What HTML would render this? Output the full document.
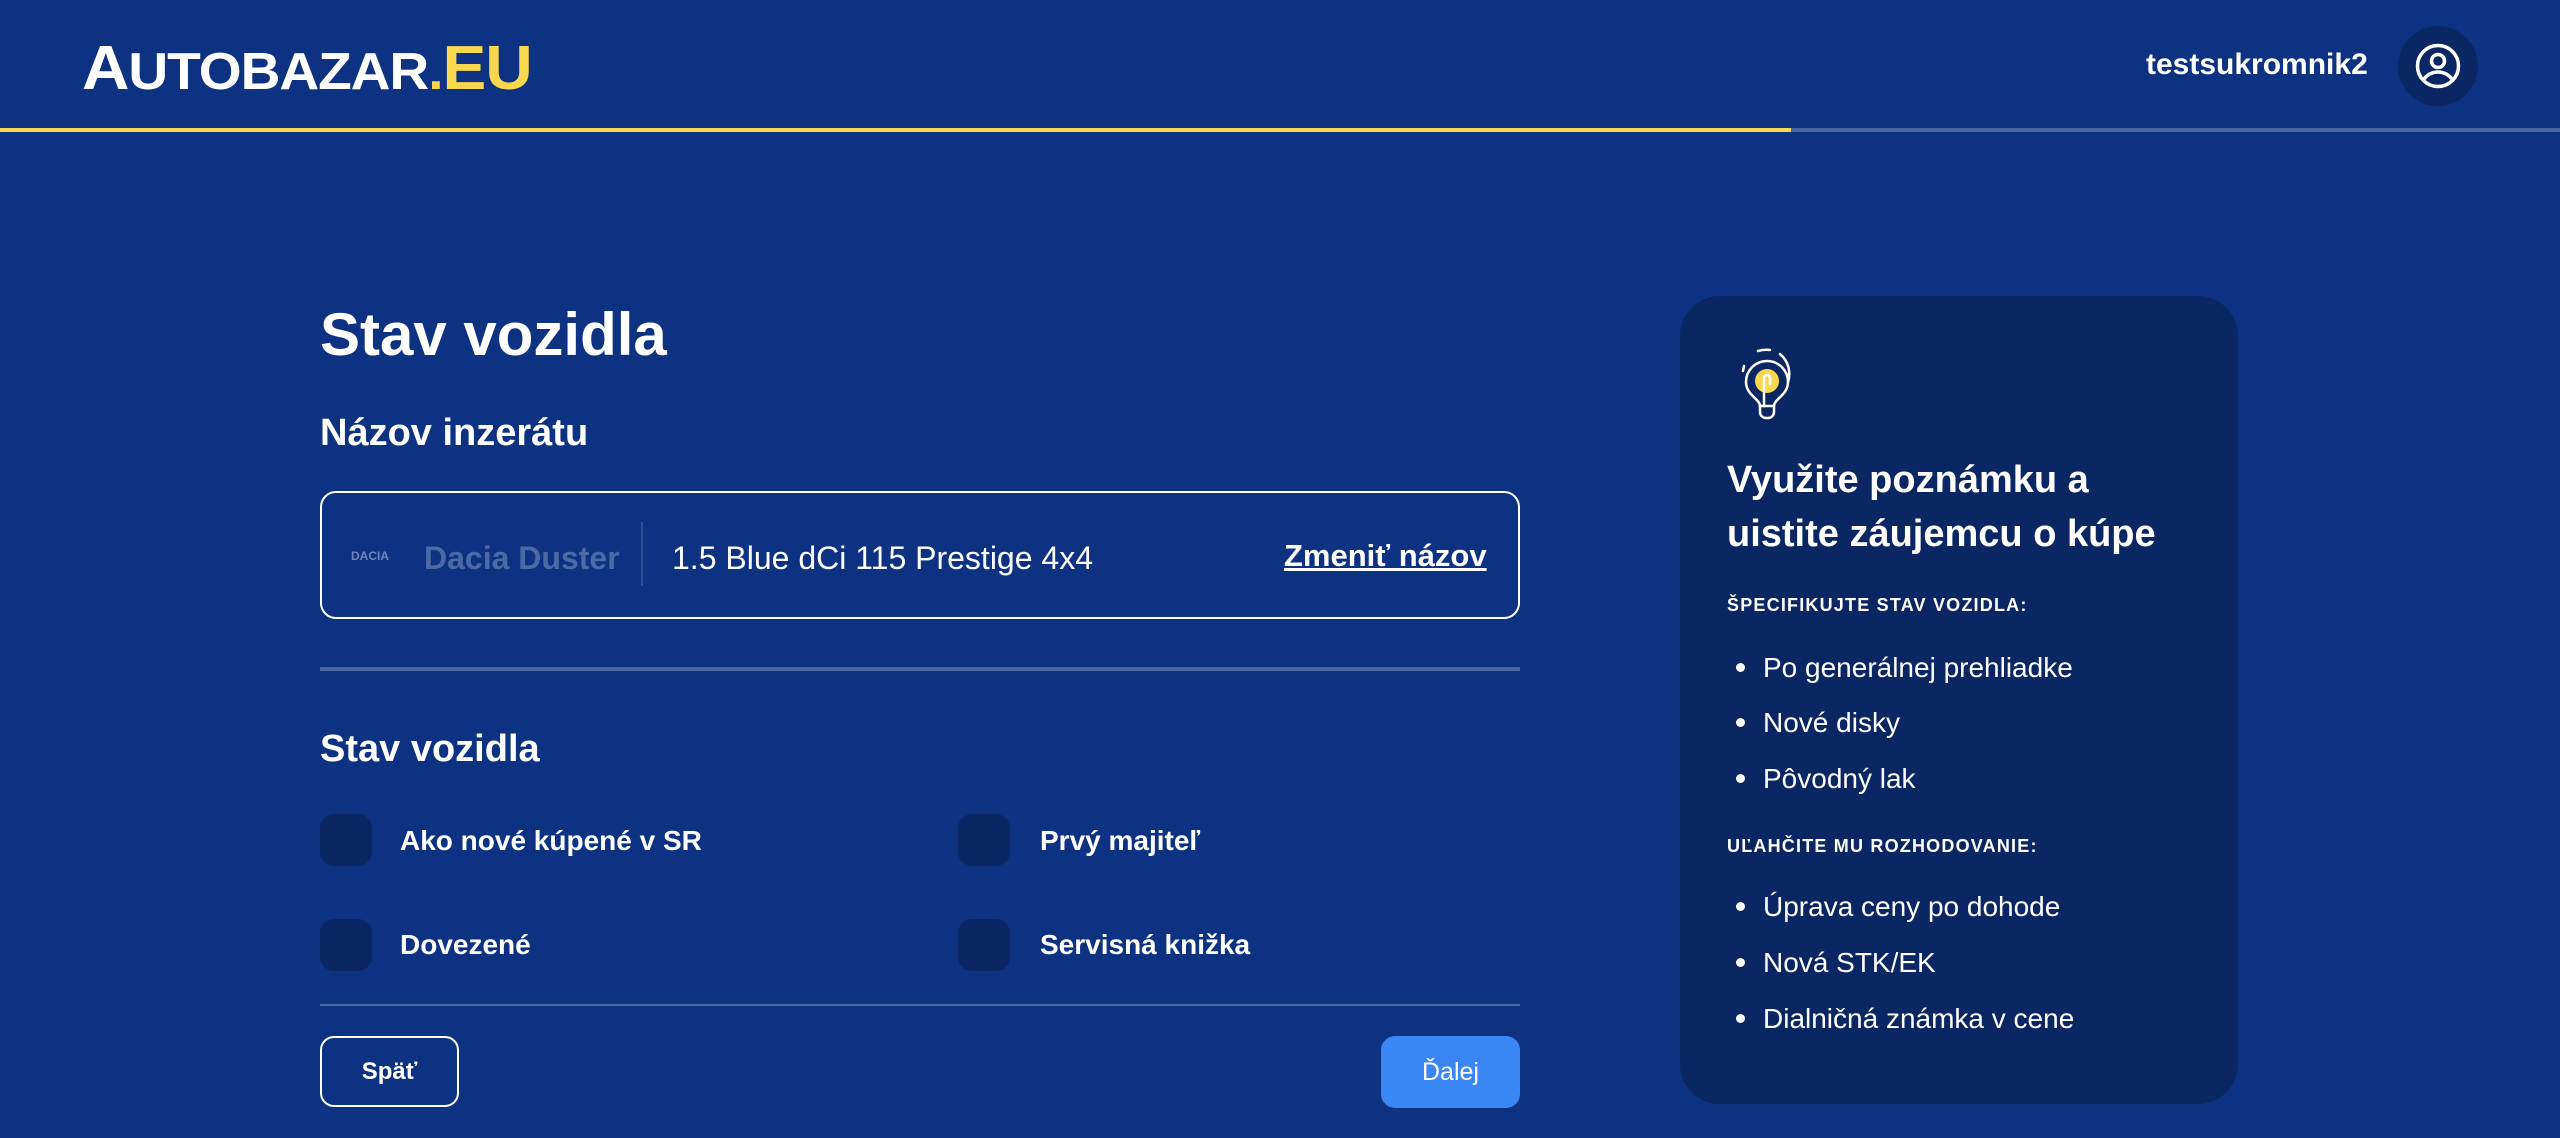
<!DOCTYPE html>
<html><head><meta charset="utf-8"><style>
*{margin:0;padding:0;box-sizing:border-box}
body{width:2560px;height:1138px;background:#0d3282;font-family:"Liberation Sans",Arial,sans-serif;color:#fff;position:relative;overflow:hidden}
.a{position:absolute;line-height:1;white-space:nowrap}
.cb{position:absolute;width:52px;height:52px;border-radius:14px;background:#0a2663}
.li{position:absolute;left:1763px;font-size:28px;line-height:1}
.li:before{content:"";position:absolute;left:-27px;top:9px;width:9px;height:9px;border-radius:50%;background:#fff}
</style></head><body>
<div class="a" style="left:82px;top:38px;font-size:52px;font-weight:900;letter-spacing:-1px;transform:scaleX(1.06);transform-origin:left"><span style="font-size:62px">A</span>UTOBAZAR<span style="color:#f9d74f">.</span><span style="color:#f9d74f;font-size:62px">EU</span></div>
<div class="a" style="left:2146px;top:50px;font-size:30px;font-weight:bold">testsukromnik2</div>
<div style="position:absolute;left:2398px;top:26px;width:80px;height:80px;border-radius:50%;background:#0a2663"></div>
<svg style="position:absolute;left:2413px;top:41px" width="50" height="50" viewBox="0 0 50 50" fill="none" stroke="#fff" stroke-width="3.5"><circle cx="25" cy="25" r="20.5"/><circle cx="25" cy="20" r="6.5"/><path d="M11 38c4-5 9-7 14-7s10 2 14 7"/></svg>
<div style="position:absolute;left:0;top:128px;width:1791px;height:4px;background:#f9d74f"></div>
<div style="position:absolute;left:1791px;top:128px;width:769px;height:4px;background:#4a67a3"></div>

<div class="a" style="left:320px;top:305px;font-size:60px;font-weight:bold">Stav vozidla</div>
<div class="a" style="left:320px;top:414px;font-size:38px;font-weight:bold">Názov inzerátu</div>
<div style="position:absolute;left:320px;top:491px;width:1200px;height:128px;border:2px solid #fff;border-radius:16px"></div>
<div class="a" style="left:351px;top:550px;font-size:12px;font-weight:bold;color:#6f86b8">DACIA</div>
<div class="a" style="left:424px;top:542px;font-size:32px;font-weight:bold;color:#4d6aa6">Dacia Duster</div>
<div style="position:absolute;left:641px;top:522px;width:2px;height:64px;background:#2f4f92"></div>
<div class="a" style="left:672px;top:542px;font-size:32px">1.5 Blue dCi 115 Prestige 4x4</div>
<div class="a" style="left:1284px;top:540px;font-size:31px;font-weight:bold;text-decoration:underline">Zmeniť názov</div>
<div style="position:absolute;left:320px;top:667px;width:1200px;height:4px;background:#4a67a3"></div>
<div class="a" style="left:320px;top:730px;font-size:38px;font-weight:bold">Stav vozidla</div>
<div class="cb" style="left:320px;top:814px"></div>
<div class="cb" style="left:958px;top:814px"></div>
<div class="cb" style="left:320px;top:919px"></div>
<div class="cb" style="left:958px;top:919px"></div>
<div class="a" style="left:400px;top:827px;font-size:28px;font-weight:bold">Ako nové kúpené v SR</div>
<div class="a" style="left:1040px;top:827px;font-size:28px;font-weight:bold">Prvý majiteľ</div>
<div class="a" style="left:400px;top:931px;font-size:28px;font-weight:bold">Dovezené</div>
<div class="a" style="left:1040px;top:931px;font-size:28px;font-weight:bold">Servisná knižka</div>
<div style="position:absolute;left:320px;top:1004px;width:1200px;height:2px;background:#4a67a3"></div>
<div style="position:absolute;left:320px;top:1036px;width:139px;height:71px;border:2px solid #fff;border-radius:14px;font-size:24px;font-weight:bold;display:flex;align-items:center;justify-content:center">Späť</div>
<div style="position:absolute;left:1381px;top:1036px;width:139px;height:72px;background:#3a86f4;border-radius:14px;font-size:25px;display:flex;align-items:center;justify-content:center">Ďalej</div>

<div style="position:absolute;left:1680px;top:296px;width:558px;height:808px;background:#0a2663;border-radius:40px"></div>
<svg style="position:absolute;left:1735px;top:348px" width="70" height="74" viewBox="0 0 70 74" fill="none" stroke="#fff" stroke-width="2.5" stroke-linecap="round">
<circle cx="32" cy="33" r="12" fill="#f9d74f" stroke="none"/>
<path d="M25 58c0-7-14-11-14-24a21 21 0 0 1 42 0c0 13-14 17-14 24z"/>
<path d="M25 58v6a6 6 0 0 0 6 6h2a6 6 0 0 0 6-6v-6"/>
<path d="M29 58v-28a3 3 0 0 1 6 0v6"/>
<path d="M23 3a30 30 0 0 1 12-1"/><path d="M45 6a26 26 0 0 1 8 28"/><path d="M9 18l-1 5"/>
</svg>
<div class="a" style="left:1727px;top:453px;font-size:38px;font-weight:bold;line-height:54px;white-space:normal;width:480px">Využite poznámku a uistite záujemcu o kúpe</div>
<div class="a" style="left:1727px;top:596px;font-size:18px;font-weight:bold;letter-spacing:1.2px">ŠPECIFIKUJTE STAV VOZIDLA:</div>
<div class="li" style="top:654px">Po generálnej prehliadke</div>
<div class="li" style="top:709px">Nové disky</div>
<div class="li" style="top:765px">Pôvodný lak</div>
<div class="a" style="left:1727px;top:837px;font-size:18px;font-weight:bold;letter-spacing:1.2px">UĽAHČITE MU ROZHODOVANIE:</div>
<div class="li" style="top:893px">Úprava ceny po dohode</div>
<div class="li" style="top:949px">Nová STK/EK</div>
<div class="li" style="top:1005px">Dialničná známka v cene</div>
</body></html>
